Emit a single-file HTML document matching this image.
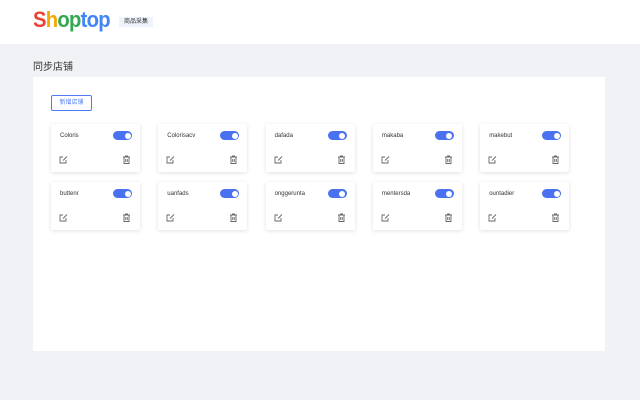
<html><head><style>
body{margin:0;width:640px;height:400px;background:#f0f2f5;font-family:"Liberation Sans","Noto Sans CJK SC",sans-serif;position:relative;overflow:hidden}
.hd{position:absolute;left:0;top:0;width:640px;height:44px;background:#fff}
.logo{position:absolute;left:33px;top:7px;font-size:22px;font-weight:bold;letter-spacing:-0.8px;transform:scaleX(0.92);transform-origin:left}
.tag{position:absolute;left:119px;top:17px;width:34px;height:10px;background:#eef3fb;font-size:6px;line-height:10px;text-align:center;color:#333}
.title{position:absolute;left:33px;top:58px;font-size:10px;color:#333}
.panel{position:absolute;left:33px;top:77px;width:572px;height:274px;background:#fff}
.btn{position:absolute;left:18px;top:18px;width:39px;height:14px;border:1px solid #4d7cf5;border-radius:2px;font-size:6px;color:#4d7cf5;text-align:center;line-height:14px}
.card{position:absolute;width:89px;height:48px;background:#fff;box-shadow:0 1px 4px rgba(0,0,0,.12);border-radius:2px}
.nm{position:absolute;left:9px;top:9px;font-size:6px;color:#333}
.tg{position:absolute;left:62px;top:7px;width:19px;height:9px;border-radius:5px;background:#4a72f0}
.tg:after{content:"";position:absolute;right:1.5px;top:1.5px;width:6px;height:6px;border-radius:50%;background:#fff}
.ic{position:absolute;top:31px}
</style></head><body>
<div class="hd"><div class="logo"><span style="color:#ea4335">S</span><span style="color:#f7a800">h</span><span style="color:#34a853">o</span><span style="color:#34a853">p</span><span style="color:#4285f4">t</span><span style="color:#4285f4">o</span><span style="color:#4285f4">p</span></div><div class="tag">商品采集</div></div>
<div class="title">同步店铺</div>
<div class="panel"><div class="btn">新增店铺</div></div>
<div id="c"></div>
<script>
var n=["Coloris","Colorisacv","dafada","makaba","makebut","buttenr","uanfads","onggerunta","mentersda","ountadier"];
var h="";
for(var i=0;i<10;i++){var x=51+(i%5)*107.3,y=124+Math.floor(i/5)*58;
h+='<div class="card" style="left:'+x+'px;top:'+y+'px"><div class="nm">'+n[i]+'</div><div class="tg"></div>'+
'<svg class="ic" style="left:8px" width="9" height="9" viewBox="0 0 9 9" fill="none" stroke="#666" stroke-width="0.9"><path d="M7 5v3H1V2h3"/><path d="M4 5.5l4-4"/></svg>'+
'<svg class="ic" style="left:71px" width="9" height="9" viewBox="0 0 9 9" fill="none" stroke="#666" stroke-width="0.9"><path d="M1 2h7M3.5 2V1h2v1M2 2v6.5h5V2M3.7 4v3M5.3 4v3"/></svg></div>';}
document.getElementById("c").innerHTML=h;
</script>
</body></html>
